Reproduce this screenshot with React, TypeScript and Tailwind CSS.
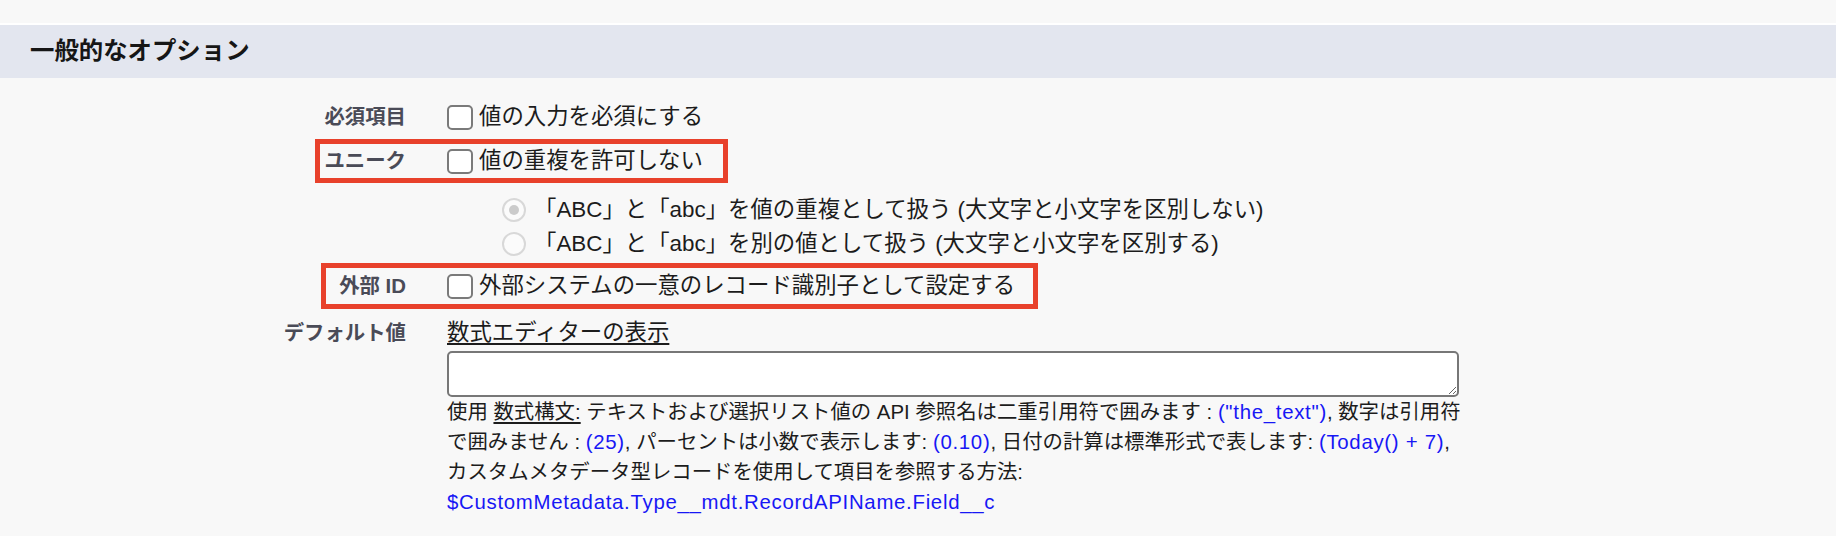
import type { ReactNode } from 'react';

const FONT = { fontFamily: '"Liberation Sans", "Noto Sans CJK JP", sans-serif' };

const Checkbox = () => (
  <span className="inline-block h-[25px] w-[26px] shrink-0 rounded-[5px] border-2 border-[#7a7a7a] bg-white" />
);

const Radio = ({ checked }: { checked?: boolean }) => (
  <span className="flex h-[24px] w-[24px] shrink-0 items-center justify-center rounded-full border-2 border-[#d8d8d8] bg-[#fbfbfb]">
    {checked && <span className="h-[10px] w-[10px] rounded-full bg-[#cbcbcb]" />}
  </span>
);

const Label = ({ children }: { children: ReactNode }) => (
  <div className="w-[406px] shrink-0 text-right text-[20.4px] font-bold leading-[30px] text-[#4a4b57]">
    {children}
  </div>
);

// one checkbox row of the options table
const OptionRow = ({ label, text, mark }: { label: string; text: string; mark?: ReactNode }) => (
  <div className="relative flex h-[44px] items-center">
    <Label>{label}</Label>
    <div className="ml-[41px] flex items-center gap-[6px]">
      <Checkbox />
      <span className="text-[22.4px] leading-[30px] text-[#1c1c1c]">{text}</span>
    </div>
    {mark}
  </div>
);

const Blue = ({ children }: { children: ReactNode }) => (
  <span className="tracking-[0.7px] text-[#1717f5]">{children}</span>
);

export default function App() {
  return (
    <div className="h-[536px] w-full overflow-hidden bg-[#f8f8f8]" style={FONT}>
      <div className="h-[23px]" />

      {/* Section header */}
      <div className="flex h-[55px] items-center border-t-2 border-white bg-[#e3e6ef] pl-[30px]">
        <h2 className="text-[24.4px] font-bold text-[#161616]">一般的なオプション</h2>
      </div>

      <div className="pt-[17px]">
        <OptionRow label="必須項目" text="値の入力を必須にする" />
        <OptionRow
          label="ユニーク"
          text="値の重複を許可しない"
          mark={<div className="pointer-events-none absolute top-0 left-[315px] h-[44px] w-[413px] border-[5px] border-[#e8412b]" />}
        />

        {/* case sensitivity radios */}
        <div className="mt-[10px] flex flex-col pl-[502px] text-[22.4px] text-[#1c1c1c]">
          <div className="flex h-[34px] items-center gap-[8px]">
            <Radio checked />
            <span className="leading-[30px]">「ABC」と「abc」を値の重複として扱う (大文字と小文字を区別しない)</span>
          </div>
          <div className="flex h-[34px] items-center gap-[8px]">
            <Radio />
            <span className="leading-[30px]">「ABC」と「abc」を別の値として扱う (大文字と小文字を区別する)</span>
          </div>
        </div>

        <div className="mt-[3px]">
          <OptionRow
            label="外部 ID"
            text="外部システムの一意のレコード識別子として設定する"
            mark={<div className="pointer-events-none absolute top-[-1px] left-[321px] h-[46px] w-[717px] border-[5px] border-[#e8412b]" />}
          />
        </div>

        {/* default value */}
        <div className="mt-[10px] flex">
          <Label>デフォルト値</Label>
          <div className="ml-[41px] text-[22.4px] leading-[30px] text-[#1c1c1c]">
            <a className="underline decoration-[2px] underline-offset-[3px]">数式エディターの表示</a>
            <textarea className="mt-[3px] block h-[46px] w-[1012px] rounded-[5px] border-2 border-[#777777] bg-white" />
            <p className="whitespace-nowrap text-[20.4px] leading-[30px]">
              使用 <span className="underline decoration-[2px] underline-offset-[3px]">数式構文:</span> テキストおよび選択リスト値の API 参照名は二重引用符で囲みます : <Blue>("the_text")</Blue>, 数字は引用符
              <br />
              で囲みません : <Blue>(25)</Blue>, パーセントは小数で表示します: <Blue>(0.10)</Blue>, 日付の計算は標準形式で表します: <Blue>(Today() + 7)</Blue>,
              <br />
              カスタムメタデータ型レコードを使用して項目を参照する方法:
              <br />
              <Blue>$CustomMetadata.Type__mdt.RecordAPIName.Field__c</Blue>
            </p>
          </div>
        </div>
      </div>
    </div>
  );
}
